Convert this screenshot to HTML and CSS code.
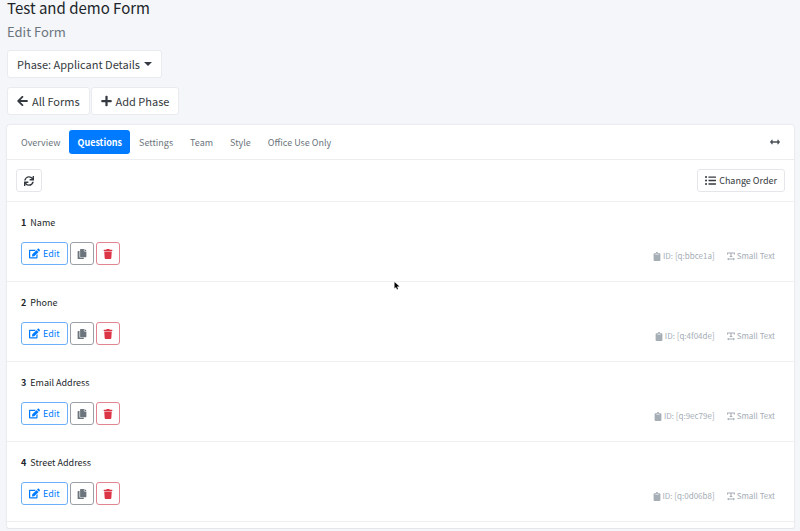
FILE: index.html
```html
<!DOCTYPE html>
<html lang="en">
<head>
<meta charset="utf-8">
<meta name="viewport" content="width=device-width, initial-scale=1">
<title>Test and demo Form</title>
<link rel="stylesheet" href="styles.css">
</head>
<body>
<svg class="sprite" aria-hidden="true">
  <symbol id="i-left" viewBox="0 0 448 512"><path d="M257.500 445.100l-22.200 22.200c-9.400 9.400-24.600 9.400-33.900 0L7 273c-9.400-9.400-9.400-24.600 0-33.900L201.400 44.700c9.400-9.400 24.600-9.400 33.900 0l22.200 22.200c9.500 9.500 9.300 25-.4 34.300L136.600 216H424c13.300 0 24 10.700 24 24v32c0 13.300-10.700 24-24 24H136.600l120.500 114.800c9.800 9.300 10 24.800.4 34.300z"/></symbol>
  <symbol id="i-plus" viewBox="0 0 448 512"><path d="M416 208H272V64c0-17.700-14.300-32-32-32h-32c-17.700 0-32 14.300-32 32v144H32c-17.700 0-32 14.300-32 32v32c0 17.700 14.300 32 32 32h144v144c0 17.700 14.300 32 32 32h32c17.700 0 32-14.300 32-32V304h144c17.700 0 32-14.300 32-32v-32c0-17.700-14.300-32-32-32z"/></symbol>
  <symbol id="i-wide" viewBox="0 0 512 512"><path d="M378 154v68H134v-68c0-21-26-32-41-17L7 239c-9 9-9 25 0 34l86 102c15 15 41 4 41-17v-68h244v68c0 21 26 32 41 17l86-102c9-9 9-25 0-34l-86-102c-15-15-41-4-41 17z"/></symbol>
  <symbol id="i-sync" viewBox="0 0 512 512"><path d="M440.600 12.600l4 82.800A247.200 247.200 0 0 0 255.800 8C134.700 8 33.900 94.900 12.300 209.800A12 12 0 0 0 24.100 224h49a12 12 0 0 0 11.700-9.300 175.900 175.900 0 0 1 317-56.900l-101.500-4.900a12 12 0 0 0-12.600 12v47.400a12 12 0 0 0 12 12H500a12 12 0 0 0 12-12V12a12 12 0 0 0-12-12h-47.400a12 12 0 0 0-12 12.600zM255.800 432a175.600 175.600 0 0 1-146-77.800l101.800 4.900a12 12 0 0 0 12.600-12v-47.400a12 12 0 0 0-12-12H12a12 12 0 0 0-12 12V500a12 12 0 0 0 12 12h47.400a12 12 0 0 0 12-12.600l-4.200-82.600A247.200 247.200 0 0 0 255.800 504c121.100 0 221.900-86.900 243.500-201.800a12 12 0 0 0-11.800-14.200h-49a12 12 0 0 0-11.700 9.300A175.900 175.900 0 0 1 255.800 432z"/></symbol>
  <symbol id="i-list" viewBox="0 0 512 512"><path d="M48 48a48 48 0 1 0 0 96 48 48 0 0 0 0-96zm0 160a48 48 0 1 0 0 96 48 48 0 0 0 0-96zm0 160a48 48 0 1 0 0 96 48 48 0 0 0 0-96zM176 64h320c9 0 16 7 16 16v32c0 9-7 16-16 16H176c-9 0-16-7-16-16V80c0-9 7-16 16-16zm0 160h320c9 0 16 7 16 16v32c0 9-7 16-16 16H176c-9 0-16-7-16-16v-32c0-9 7-16 16-16zm0 160h320c9 0 16 7 16 16v32c0 9-7 16-16 16H176c-9 0-16-7-16-16v-32c0-9 7-16 16-16z"/></symbol>
  <symbol id="i-edit" viewBox="0 0 576 512"><path d="M402.600 83.200l90.200 90.200c3.800 3.800 3.800 10 0 13.800L274.400 405.600l-92.800 10.300c-12.400 1.400-22.900-9.100-21.500-21.500l10.300-92.800L388.800 83.200c3.800-3.800 10-3.800 13.800 0zm162-22.900l-48.800-48.800c-15.200-15.200-39.900-15.200-55.200 0l-35.400 35.400c-3.800 3.800-3.800 10 0 13.800l90.200 90.200c3.800 3.800 10 3.800 13.800 0l35.400-35.400c15.200-15.300 15.200-40 0-55.200zM384 346.200V448H64V128h229.800c3.200 0 6.200-1.300 8.500-3.500l40-40c7.600-7.600 2.200-20.500-8.500-20.500H48C21.500 64 0 85.500 0 112v352c0 26.500 21.500 48 48 48h352c26.500 0 48-21.500 48-48V306.200c0-10.700-12.900-16-20.500-8.500l-40 40c-2.200 2.300-3.500 5.300-3.500 8.500z"/></symbol>
  <symbol id="i-copy" viewBox="0 0 448 512"><path d="M320 448v40c0 13.300-10.700 24-24 24H24c-13.300 0-24-10.700-24-24V120c0-13.300 10.700-24 24-24h72v296c0 30.900 25.100 56 56 56h168zm0-344V0H152c-13.300 0-24 10.700-24 24v368c0 13.300 10.700 24 24 24h272c13.300 0 24-10.700 24-24V128H344c-13.200 0-24-10.800-24-24zm121-31L375 7A24 24 0 0 0 358.100 0H352v96h96v-6.100a24 24 0 0 0-7-16.900z"/></symbol>
  <symbol id="i-trash" viewBox="0 0 448 512"><path d="M432 32H312l-9.400-18.700A24 24 0 0 0 281.100 0H166.800a23.700 23.700 0 0 0-21.400 13.300L136 32H16A16 16 0 0 0 0 48v32a16 16 0 0 0 16 16h416a16 16 0 0 0 16-16V48a16 16 0 0 0-16-16zM53.200 467a48 48 0 0 0 47.900 45h245.800a48 48 0 0 0 47.900-45L416 128H32z"/></symbol>
  <symbol id="i-clip" viewBox="0 0 384 512"><path d="M384 112v352c0 26.500-21.500 48-48 48H48c-26.500 0-48-21.500-48-48V112c0-26.500 21.500-48 48-48h80c0-35.300 28.700-64 64-64s64 28.700 64 64h80c26.500 0 48 21.500 48 48zM192 40a24 24 0 1 0 0 48 24 24 0 0 0 0-48zm96 114v-20c0-3-3-6-6-6H102c-3 0-6 3-6 6v20c0 3 3 6 6 6h180c3 0 6-3 6-6z"/></symbol>
  <symbol id="i-text" viewBox="0 0 448 512"><path d="M16 32h416c9 0 16 7 16 16v96h-56V88H256v144h40v48H152v-48h40V88H56v56H0V48c0-9 7-16 16-16zM96 320v56h256v-56l96 84-96 84v-56H96v56L0 404z"/></symbol>
</svg>

<header class="page-head">
  <h1>Test and demo Form</h1>
  <p class="subtitle">Edit Form</p>
  <div class="actions">
    <button class="btn large" type="button" aria-haspopup="true">Phase: Applicant Details <span class="caret"></span></button>
  </div>
  <div class="actions">
    <a class="btn large" href="#forms"><svg class="icon"><use href="#i-left"/></svg>All Forms</a>
    <button class="btn large" type="button"><svg class="icon"><use href="#i-plus"/></svg>Add Phase</button>
  </div>
</header>

<main class="card">
  <nav class="tabs">
    <a href="#overview">Overview</a>
    <a class="active" href="#questions" aria-current="page">Questions</a>
    <a href="#settings">Settings</a>
    <a href="#team">Team</a>
    <a href="#style">Style</a>
    <a href="#office">Office Use Only</a>
    <button class="expand" type="button" aria-label="Toggle width"><svg class="icon"><use href="#i-wide"/></svg></button>
  </nav>
  <div class="toolbar">
    <button class="btn square" type="button" aria-label="Refresh"><svg class="icon"><use href="#i-sync"/></svg></button>
    <button class="btn" type="button"><svg class="icon wide"><use href="#i-list"/></svg>Change Order</button>
  </div>
  <ol class="questions">
    <li>
      <h2><b>1</b>Name</h2>
      <div class="row">
        <button class="btn edit" type="button"><svg class="icon wide"><use href="#i-edit"/></svg>Edit</button>
        <button class="btn copy" type="button" aria-label="Copy"><svg class="icon"><use href="#i-copy"/></svg></button>
        <button class="btn delete" type="button" aria-label="Delete"><svg class="icon"><use href="#i-trash"/></svg></button>
        <div class="meta"><span><svg class="icon"><use href="#i-clip"/></svg>ID: [q:bbce1a]</span><span><svg class="icon"><use href="#i-text"/></svg>Small Text</span></div>
      </div>
    </li>
    <li>
      <h2><b>2</b>Phone</h2>
      <div class="row">
        <button class="btn edit" type="button"><svg class="icon wide"><use href="#i-edit"/></svg>Edit</button>
        <button class="btn copy" type="button" aria-label="Copy"><svg class="icon"><use href="#i-copy"/></svg></button>
        <button class="btn delete" type="button" aria-label="Delete"><svg class="icon"><use href="#i-trash"/></svg></button>
        <div class="meta"><span><svg class="icon"><use href="#i-clip"/></svg>ID: [q:4f04de]</span><span><svg class="icon"><use href="#i-text"/></svg>Small Text</span></div>
      </div>
    </li>
    <li>
      <h2><b>3</b>Email Address</h2>
      <div class="row">
        <button class="btn edit" type="button"><svg class="icon wide"><use href="#i-edit"/></svg>Edit</button>
        <button class="btn copy" type="button" aria-label="Copy"><svg class="icon"><use href="#i-copy"/></svg></button>
        <button class="btn delete" type="button" aria-label="Delete"><svg class="icon"><use href="#i-trash"/></svg></button>
        <div class="meta"><span><svg class="icon"><use href="#i-clip"/></svg>ID: [q:9ec79e]</span><span><svg class="icon"><use href="#i-text"/></svg>Small Text</span></div>
      </div>
    </li>
    <li>
      <h2><b>4</b>Street Address</h2>
      <div class="row">
        <button class="btn edit" type="button"><svg class="icon wide"><use href="#i-edit"/></svg>Edit</button>
        <button class="btn copy" type="button" aria-label="Copy"><svg class="icon"><use href="#i-copy"/></svg></button>
        <button class="btn delete" type="button" aria-label="Delete"><svg class="icon"><use href="#i-trash"/></svg></button>
        <div class="meta"><span><svg class="icon"><use href="#i-clip"/></svg>ID: [q:0d06b8]</span><span><svg class="icon"><use href="#i-text"/></svg>Small Text</span></div>
      </div>
    </li>
  </ol>
</main>
<svg class="pointer" viewBox="0 0 12 18" aria-hidden="true"><path d="M1 1v13l3-3 2 5 2-1-2-5h5z"/></svg>
</body>
</html>
```
FILE: styles.css
```css
* {
  box-sizing: border-box;
}

body {
  margin: 0;
  padding: 0 6px 0 7px;
  background: #f4f6f9;
  color: #212529;
  font-family: "Noto Sans CJK SC", "Noto Sans", sans-serif;
  font-size: 9px;
  line-height: 16px;
}

h1,
h2,
p,
ol {
  margin: 0;
  padding: 0;
  font-weight: 400;
}

.sprite {
  display: none;
}

.icon {
  width: 10px;
  height: 10px;
  flex: none;
  fill: currentColor;
}

.icon.wide {
  width: 11px;
  height: 11px;
}

.page-head {
  padding-bottom: 10px;
}

h1 {
  padding-bottom: 4px;
  font-size: 15px;
  line-height: 16px;
}

.subtitle {
  color: #6c757d;
  font-size: 13px;
  line-height: 24px;
}

.actions {
  display: flex;
  gap: 1px;
  padding-top: 6px;
}

.actions + .actions {
  padding-top: 9px;
}

.btn {
  display: inline-flex;
  align-items: center;
  justify-content: center;
  gap: 3px;
  height: 23px;
  padding: 0 7px;
  border: 1px solid #e4e6e9;
  border-radius: 3px;
  background: #fff;
  color: #343a40;
  font: inherit;
  text-decoration: none;
  cursor: pointer;
}

.btn.large {
  gap: 4px;
  height: 28px;
  padding: 0 9px 1px;
  border-color: #e9ebee;
  font-size: 11px;
}

.btn.large .icon {
  width: 11px;
  height: 12px;
}

.btn.square {
  width: 26px;
  padding: 0;
}

.caret {
  border: 4px solid transparent;
  border-top-color: currentColor;
  border-bottom: 0;
}

.card {
  overflow: hidden;
  padding-bottom: 6px;
  border-bottom: 1px solid #e4e6e9;
  border-radius: 3px;
  background: #fff;
  box-shadow: 0 0 2px rgba(0, 0, 0, 0.15);
}

.tabs {
  display: flex;
  align-items: center;
  gap: 1px;
  height: 35px;
  padding: 0 14px 0 6px;
  border-bottom: 1px solid #ebedef;
}

.tabs a {
  padding: 5px 8px 3px;
  border-radius: 3px;
  color: #6c757d;
  text-decoration: none;
}

.tabs .active {
  background: #007bff;
  color: #fff;
  font-weight: 700;
}

.expand {
  display: flex;
  margin-left: auto;
  padding: 0;
  border: 0;
  background: none;
  color: #495057;
}

.toolbar {
  display: flex;
  align-items: center;
  justify-content: space-between;
  height: 42px;
  padding: 0 9px;
  border-bottom: 1px solid #edeff1;
}

.questions {
  list-style: none;
}

.questions li {
  height: 80px;
  padding: 13px 19px 0 14px;
  border-bottom: 1px solid #edeff1;
}

h2 {
  display: flex;
  gap: 4px;
  font-size: 9px;
  line-height: 16px;
}

.row {
  display: flex;
  gap: 2px;
  padding-top: 11px;
}

.edit {
  border-color: #6ab0fa;
  color: #007bff;
}

.copy {
  width: 24px;
  padding: 0;
  border-color: #9a9fa5;
  color: #6c757d;
}

.delete {
  width: 24px;
  padding: 0;
  border-color: #e28590;
  color: #dc3545;
}

.meta {
  display: flex;
  gap: 12px;
  margin-left: auto;
  padding-top: 5px;
  color: #a5adb5;
  font-size: 8px;
}

.meta span {
  display: flex;
  align-items: center;
  gap: 2px;
}

.meta .icon {
  width: 8px;
  height: 9px;
}

.pointer {
  position: absolute;
  top: 281px;
  left: 394px;
  width: 6px;
  height: 10px;
}
```
